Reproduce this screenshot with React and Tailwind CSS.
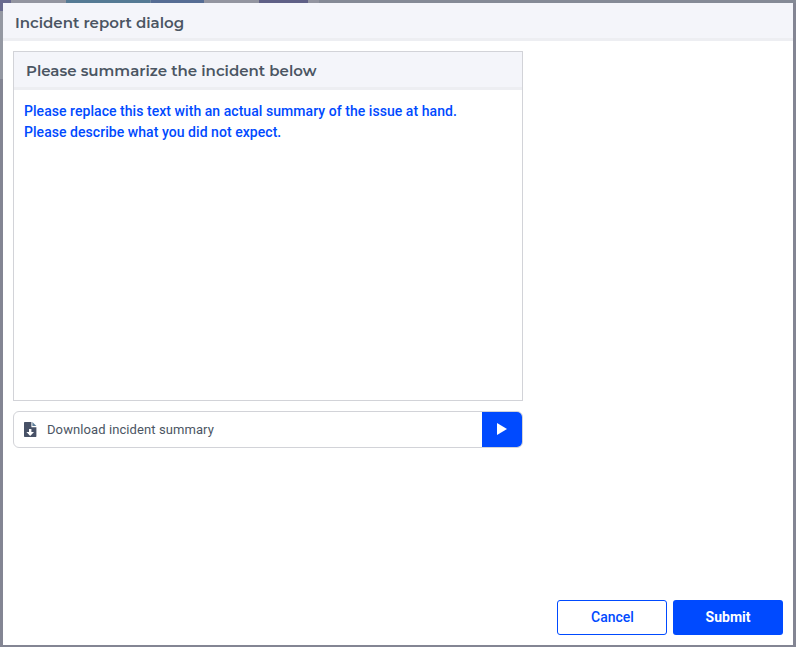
function FileDownIcon() {
  return (
    <svg className="shrink-0" width="13" height="15" viewBox="0 0 13 15">
      <path
        fill="#475166"
        fillRule="evenodd"
        d="M0.8 0H7.4V5.2H12.4V14.2Q12.4 15 11.6 15H0.8Q0 15 0 14.2V0.8Q0 0 0.8 0ZM5 7V10H2.4L6.2 13.9L10 10H7.4V7Z"
      />
      <path fill="#5f7f99" d="M8.4 0L12.4 4.1H8.4Z" />
    </svg>
  );
}

function Header({ children, className = "" }) {
  return (
    <div
      className={`flex h-[38px] shrink-0 items-center border-b-[3px] border-[#edeef2] bg-[#f4f5fa] pl-3 font-['Montserrat','Inter',sans-serif] text-[15px] font-semibold whitespace-nowrap text-[#4b5563] ${className}`}
    >
      {children}
    </div>
  );
}

function Backdrop() {
  return (
    <div className="flex h-[3px] shrink-0">
      <div className="w-[11px] bg-[#686a8f]" />
      <div className="w-[55px] bg-[#9395a0]" />
      <div className="w-[84px] bg-[#557a94]" />
      <div className="w-px bg-[#7188a0]" />
      <div className="w-[53px] bg-[#566d94]" />
      <div className="w-[55px] bg-[#9395a0]" />
      <div className="w-[49px] bg-[#5f6086]" />
      <div className="w-[11px] bg-[#9395a0]" />
      <div className="flex-1 bg-[#858a96]" />
    </div>
  );
}

export default function App() {
  return (
    <div className="flex h-[647px] w-[796px] flex-col overflow-hidden bg-[#838593] font-['Roboto',sans-serif]">
      <Backdrop />
      <div className="flex h-[642px]">
        <div className="flex w-[3px] shrink-0 flex-col">
          <div className="h-[8px] bg-[#686a8f]" />
          <div className="h-[68px] bg-[#9498a2]" />
          <div className="flex-1 bg-[#838593]" />
        </div>
        <main className="flex w-[790px] flex-col bg-white">
          <Header className="pt-[5px]">Incident report dialog</Header>
          <div className="flex flex-1 flex-col px-[10px] pt-[10px] pb-[10px]">
            <section className="flex h-[350px] w-[510px] flex-col border border-[#d2d3d8]">
              <Header className="pt-[3px]">Please summarize the incident below</Header>
              <p className="px-[10px] pt-[11px] text-[14px] leading-[21px] font-medium tracking-[0.05px] text-[#004aff]">
                Please replace this text with an actual summary of the issue at hand.
                <br />
                Please describe what you did not expect.
              </p>
            </section>
            <div className="mt-[10px] flex h-[37px] w-[510px] items-stretch overflow-hidden rounded-[6px] border border-[#d2d3d8]">
              <div className="flex flex-1 items-center pl-[10px] text-[#4b5563]">
                <FileDownIcon />
                <span className="ml-[10px] text-[13px] tracking-[0.09px]">Download incident summary</span>
              </div>
              <button className="flex w-[40px] items-center justify-center bg-[#004aff] pb-px" aria-label="Run">
                <svg width="10" height="12" viewBox="0 0 10 12" fill="white">
                  <path d="M0 0L10 6L0 12Z" />
                </svg>
              </button>
            </div>
            <div className="mt-auto flex justify-end gap-[6px] text-[14px]">
              <button className="h-[35px] w-[110px] rounded-[3px] border border-[#004aff] bg-white pl-px font-medium text-[#004aff]">
                Cancel
              </button>
              <button className="h-[35px] w-[110px] rounded-[3px] bg-[#004aff] font-bold text-white">Submit</button>
            </div>
          </div>
        </main>
      </div>
    </div>
  );
}
